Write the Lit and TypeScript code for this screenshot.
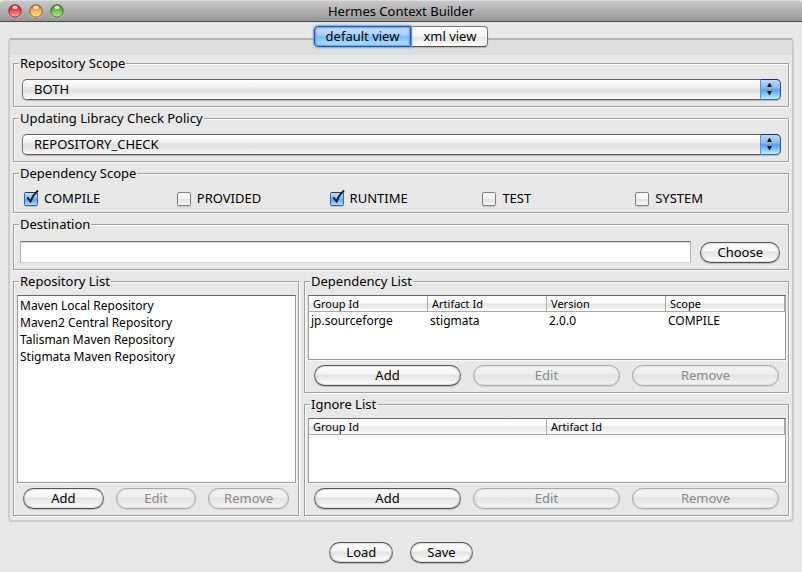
import { LitElement, html, css, svg } from "lit";
import { customElement, property, state } from "lit/decorators.js";
import { classMap } from "lit/directives/class-map.js";

const buttonStyles = css`
  .btn {
    box-sizing: border-box;
    height: 21px;
    padding: 0 16px;
    border: 1px solid #6a6a6a;
    border-top-color: #555;
    border-bottom-color: #4c4c4c;
    border-radius: 11px;
    background: linear-gradient(#fff 0%, #f6f6f6 40%, #e4e4e4 50%, #f2f2f2 75%, #fff 100%);
    box-shadow: 0 1px 1px #bdbdbd, inset 0 0 2px #999;
    color: #000;
    font: 13px/17px "Lucida Grande", "Noto Sans", sans-serif;
  }
  .btn:disabled {
    border-color: #a8a8a8;
    background: linear-gradient(#f3f3f3 0%, #efefef 40%, #e4e4e4 50%, #ececec 75%, #f4f4f4 100%);
    box-shadow: 0 1px 1px #d4d4d4, inset 0 0 2px #ccc;
    color: #8b8b8b;
  }
`;

const groupStyles = css`
  .group {
    display: block;
    min-width: 0;
    margin: 0;
    padding: 0;
    border: 1px solid #a0a0a0;
    box-shadow: 1px 1px 0 #fff, inset 1px 1px 0 #fff;
  }
  .group > legend {
    height: 17px;
    margin-left: 5px;
    padding: 0 1px;
    background: #e8e8e8;
    line-height: 17px;
    white-space: nowrap;
  }
`;

@customElement("popup-field")
class PopupField extends LitElement {
  @property() label = "";
  @property({ attribute: false }) options: string[] = [];

  static styles = [
    groupStyles,
    css`
      :host {
        display: block;
      }
      .body {
        padding: 7px 7px 6px 8px;
      }
      .popup {
        display: grid;
        grid-template-columns: 1fr 21px;
        height: 21px;
        border-radius: 5px;
        box-shadow: 0 1px 1px #b4b4b4;
      }
      .menu {
        grid-area: 1 / 1 / 2 / 3;
        box-sizing: border-box;
        width: 100%;
        height: 21px;
        margin: 0;
        padding: 0 24px 0 11px;
        appearance: none;
        border: 1px solid #777;
        border-color: #606060 #8a8a8a #5a5a5a #777;
        border-radius: 5px;
        background: linear-gradient(#fff 0%, #f2f2f2 35%, #dedede 55%, #ececec 80%, #fafafa 100%);
        color: #000;
        font: 13px/17px "Lucida Grande", "Noto Sans", sans-serif;
      }
      .cap {
        grid-area: 1 / 2 / 2 / 3;
        z-index: 1;
        box-sizing: border-box;
        height: 21px;
        border: 1px solid #2b4fa5;
        border-color: #1d2c8c #2c4f9f #3d6690 #5a93dc;
        border-radius: 0 5px 5px 0;
        background: linear-gradient(#c3d9f1 0%, #8ebbea 40%, #5b9ee4 52%, #84c3f7 75%, #b9f2ff 100%);
        pointer-events: none;
      }
      .cap svg {
        display: block;
      }
    `,
  ];

  render() {
    return html`<fieldset class="group">
      <legend id="title">${this.label}</legend>
      <div class="body">
        <div class="popup">
          <select class="menu" aria-labelledby="title">
            ${this.options.map((o) => html`<option>${o}</option>`)}
          </select>
          <span class="cap"
            ><svg width="19" height="19" viewBox="0 0 19 19" aria-hidden="true">
              <path d="M6 7 L8.500 2.500 L11 7Z M6 11 L8.500 15.500 L11 11Z" fill="#111" /></svg
          ></span>
        </div>
      </div>
    </fieldset>`;
  }
}

@customElement("scope-check")
class ScopeCheck extends LitElement {
  @property() label = "";
  @property({ type: Boolean }) checked = false;

  static styles = css`
    .check {
      display: flex;
      align-items: center;
      gap: 6px;
      height: 17px;
      line-height: 17px;
    }
    .mark {
      display: grid;
      width: 14px;
      height: 14px;
    }
    .box {
      grid-area: 1 / 1;
      box-sizing: border-box;
      width: 14px;
      height: 14px;
      margin: 0;
      appearance: none;
      border: 1px solid #808080;
      border-radius: 2px;
      background: linear-gradient(#fff 0%, #f4f4f4 45%, #e2e2e2 55%, #fafafa 100%);
      box-shadow: 0 1px 1px #c4c4c4;
    }
    .box:checked {
      border-color: #1f3596 #3567b4 #39609a #3567b4;
      background: linear-gradient(#c9def5 0%, #86b9ec 45%, #5fa5ea 55%, #a6e2ff 100%);
    }
    .tick {
      grid-area: 1 / 1;
      overflow: visible;
      pointer-events: none;
    }
    .off {
      visibility: hidden;
    }
  `;

  private toggle(e: Event) {
    this.checked = (e.target as HTMLInputElement).checked;
  }

  render() {
    return html`<label class="check">
      <span class="mark">
        <input class="box" type="checkbox" .checked=${this.checked} @change=${this.toggle} />
        <svg
          class=${classMap({ tick: true, off: !this.checked })}
          width="14"
          height="14"
          viewBox="0 0 14 14"
          aria-hidden="true"
        >
          <path d="M3.300 5.300 L6.500 9.300 C8 5.500 10.500 1.500 14 -1.500" fill="none" stroke="#1c1c2c" stroke-width="2" />
        </svg>
      </span>
      ${this.label}
    </label>`;
  }
}

@customElement("entry-group")
class EntryGroup extends LitElement {
  @property() label = "";
  @property({ attribute: false }) items?: string[];
  @property({ attribute: false }) columns: string[] = [];
  @property({ attribute: false }) rows: string[][] = [];

  static styles = [
    groupStyles,
    buttonStyles,
    css`
      :host {
        display: grid;
      }
      .group {
        display: flex;
        flex-direction: column;
      }
      .well {
        flex: 1;
        min-height: 48px;
        box-sizing: border-box;
        margin: 5px 2px 0 3px;
        border: 1px solid #999;
        border-top-color: #666;
        background: #fff;
        box-shadow: 1px 1px 0 #f8f8f8;
      }
      .items {
        margin: 0;
        padding: 1px 2px;
        list-style: none;
        font-size: 12px;
        line-height: 17px;
      }
      .grid {
        width: 100%;
        border-collapse: separate;
        border-spacing: 0;
        table-layout: fixed;
        text-align: left;
      }
      .grid th {
        height: 15px;
        padding: 0 4px;
        border-right: 1px solid #aaa;
        border-bottom: 1px solid #aaa;
        background: linear-gradient(#fff 0%, #fafafa 45%, #e6e6e6 55%, #f4f4f4 85%, #fff 100%);
        font-size: 11px;
        font-weight: 400;
        line-height: 15px;
      }
      .grid td {
        padding: 0 2px;
        font-size: 12px;
        line-height: 17px;
      }
      .actions {
        display: grid;
        grid-template-columns: repeat(3, 1fr);
        gap: 12px;
        padding: 5px 9px 6px;
      }
      .actions .btn {
        padding: 0;
      }
    `,
  ];

  private content() {
    if (this.items) {
      return html`<ul class="items" role="listbox" aria-labelledby="title">
        ${this.items.map((i) => html`<li role="option">${i}</li>`)}
      </ul>`;
    }
    return html`<table class="grid" aria-labelledby="title">
      <thead>
        <tr>
          ${this.columns.map((c) => html`<th scope="col">${c}</th>`)}
        </tr>
      </thead>
      <tbody>
        ${this.rows.map((r) => html`<tr>${r.map((c) => html`<td>${c}</td>`)}</tr>`)}
      </tbody>
    </table>`;
  }

  render() {
    return html`<fieldset class="group">
      <legend id="title">${this.label}</legend>
      <div class="well">${this.content()}</div>
      <div class="actions">
        <button class="btn" type="button">Add</button>
        <button class="btn" type="button" disabled>Edit</button>
        <button class="btn" type="button" disabled>Remove</button>
      </div>
    </fieldset>`;
  }
}

@customElement("app-root")
class AppRoot extends LitElement {
  @state() private tab = "default view";

  private scopes = [
    { name: "COMPILE", on: true },
    { name: "PROVIDED", on: false },
    { name: "RUNTIME", on: true },
    { name: "TEST", on: false },
    { name: "SYSTEM", on: false },
  ];

  private lights = [
    { name: "Close", rim: "#8f1a1c", mid: "#ee2f36", low: "#ffb9b4" },
    { name: "Minimize", rim: "#9a5416", mid: "#f5a04a", low: "#fff08a" },
    { name: "Zoom", rim: "#2f6419", mid: "#62b240", low: "#c4ee8e" },
  ];

  static styles = [
    groupStyles,
    buttonStyles,
    css`
      :host {
        display: flex;
        flex-direction: column;
        min-height: 100vh;
        background: #e8e8e8;
        color: #000;
        font: 13px/17px "Lucida Grande", "Noto Sans", sans-serif;
      }
      .titlebar {
        display: grid;
        grid-template-columns: 1fr auto 1fr;
        align-items: center;
        box-sizing: border-box;
        height: 22px;
        padding: 0 8px;
        border-top: 1px solid #dcdcdc;
        border-bottom: 1px solid #454545;
        border-radius: 4px 4px 0 0;
        background: linear-gradient(#c8c8c8, #969696);
      }
      .lights {
        display: flex;
        gap: 7px;
      }
      .light {
        width: 14px;
        height: 14px;
        padding: 0;
        border: 0;
        background: none;
      }
      .light svg {
        display: block;
      }
      .title {
        margin: 0;
        font-size: 13px;
        font-weight: 400;
      }
      .tabs {
        z-index: 1;
        display: flex;
        justify-content: center;
        margin-top: 4px;
      }
      .tab {
        box-sizing: border-box;
        height: 21px;
        padding: 0 11px;
        border: 1px solid #777;
        border-bottom-color: #4c4c4c;
        border-radius: 0 4px 4px 0;
        background: linear-gradient(#fff 0%, #f6f6f6 45%, #e6e6e6 55%, #fff 100%);
        box-shadow: 0 1px 1px #b4b4b4;
        color: #000;
        font: inherit;
      }
      .tab:first-child {
        border-radius: 4px 0 0 4px;
      }
      .tab.active {
        z-index: 1;
        border-color: #2b52a8;
        background: linear-gradient(#d2e6fa 0%, #a4cffa 42%, #7cbaf8 52%, #b4ecff 100%);
        box-shadow: 0 0 2px 1px #6fa3e0, inset 0 0 2px 1px #5c97e4;
      }
      .pane {
        flex: 1;
        display: flex;
        flex-direction: column;
        gap: 3px;
        margin: -9px 8px 0;
        padding: 15px 3px 4px;
        border: 2px solid #cdcdcd;
        border-top-color: #b4b4b4;
        border-radius: 4px;
        background: linear-gradient(#dfdfdf 15px, #e8e8e8 15px);
      }
      .scopes {
        display: grid;
        grid-template-columns: repeat(5, 1fr);
        padding: 8px 0 5px 10px;
      }
      .destination {
        display: flex;
        align-items: center;
        gap: 9px;
        padding: 8px 8px 6px 6px;
      }
      .path {
        flex: 1;
        min-width: 0;
        box-sizing: border-box;
        height: 22px;
        margin: 0;
        padding: 0 4px;
        border: 1px solid #b0b0b0;
        border-top-color: #777;
        border-bottom-color: #d4d4d4;
        border-radius: 0;
        background: #fff;
        box-shadow: inset 0 1px 0 #d8d8d8;
        font: inherit;
      }
      .lists {
        flex: 1;
        display: grid;
        grid-template-columns: 286fr 485fr;
        gap: 5px;
      }
      .stack {
        display: grid;
        grid-template-rows: 1fr 1fr;
        gap: 3px;
      }
      .footer {
        display: flex;
        justify-content: center;
        gap: 17px;
        padding: 20px 0 9px;
      }
    `,
  ];

  private light(l: { name: string; rim: string; mid: string; low: string }) {
    return html`<button class="light" type="button" aria-label=${l.name}>
      <svg width="14" height="14" viewBox="0 0 14 14">
        <defs>
          <linearGradient id=${l.name} x1="0" y1="0" x2="0" y2="1">
            <stop offset="0" stop-color=${l.rim} />
            <stop offset="0.35" stop-color=${l.mid} />
            <stop offset="1" stop-color=${l.low} />
          </linearGradient>
        </defs>
        ${svg`<circle cx="7" cy="7.500" r="6.900" fill="#d8d8d8" opacity="0.7" />
        <circle cx="7" cy="7" r="6.200" fill=${`url(#${l.name})`} stroke=${l.rim} stroke-width="1" />
        <ellipse cx="7" cy="3.400" rx="2.800" ry="1.800" fill="#fff" opacity="0.8" />`}
      </svg>
    </button>`;
  }

  render() {
    return html`
      <header class="titlebar">
        <div class="lights">${this.lights.map((l) => this.light(l))}</div>
        <h1 class="title">Hermes Context Builder</h1>
      </header>
      <div class="tabs" role="tablist">
        ${["default view", "xml view"].map(
          (t) => html`<button
            class=${classMap({ tab: true, active: t === this.tab })}
            type="button"
            role="tab"
            aria-selected=${t === this.tab}
            @click=${() => (this.tab = t)}
          >
            ${t}
          </button>`
        )}
      </div>
      <main class="pane">
        <popup-field label="Repository Scope" .options=${["BOTH"]}></popup-field>
        <popup-field label="Updating Libracy Check Policy" .options=${["REPOSITORY_CHECK"]}></popup-field>
        <fieldset class="group">
          <legend>Dependency Scope</legend>
          <div class="scopes">
            ${this.scopes.map((s) => html`<scope-check label=${s.name} ?checked=${s.on}></scope-check>`)}
          </div>
        </fieldset>
        <fieldset class="group">
          <legend id="destination">Destination</legend>
          <div class="destination">
            <input class="path" type="text" aria-labelledby="destination" />
            <button class="btn" type="button">Choose</button>
          </div>
        </fieldset>
        <div class="lists">
          <entry-group
            label="Repository List"
            .items=${[
              "Maven Local Repository",
              "Maven2 Central Repository",
              "Talisman Maven Repository",
              "Stigmata Maven Repository",
            ]}
          ></entry-group>
          <div class="stack">
            <entry-group
              label="Dependency List"
              .columns=${["Group Id", "Artifact Id", "Version", "Scope"]}
              .rows=${[["jp.sourceforge", "stigmata", "2.0.0", "COMPILE"]]}
            ></entry-group>
            <entry-group label="Ignore List" .columns=${["Group Id", "Artifact Id"]}></entry-group>
          </div>
        </div>
      </main>
      <footer class="footer">
        <button class="btn" type="button">Load</button>
        <button class="btn" type="button">Save</button>
      </footer>
    `;
  }
}
